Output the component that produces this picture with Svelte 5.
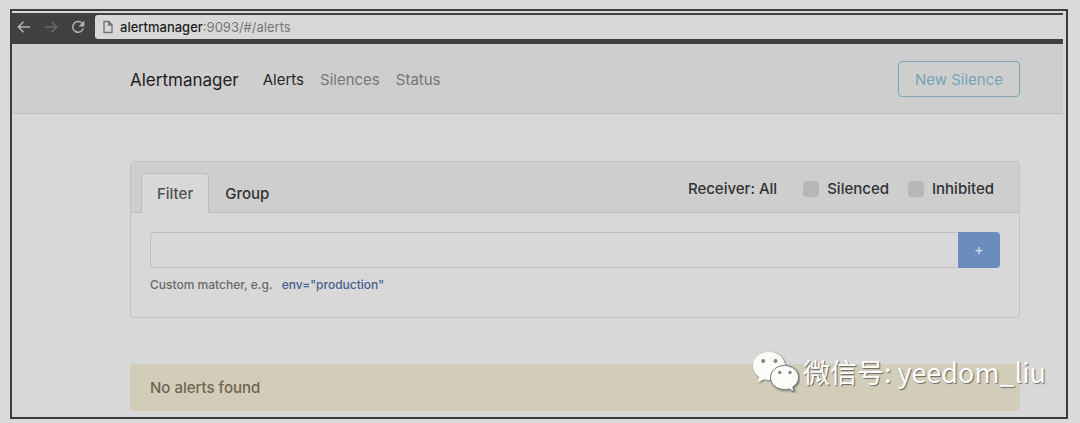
<script>
  let matcher = $state('');
  let silenced = $state(false);
  let inhibited = $state(false);
</script>

<div class="frame">
  <div class="browser">
    <button class="tool" aria-label="Back">
      <svg width="14" height="14" viewBox="0 0 14 14"><path d="M13 7H1.500M6.500 1.800 1.300 7l5.200 5.200" /></svg>
    </button>
    <button class="tool dim" aria-label="Forward">
      <svg width="14" height="14" viewBox="0 0 14 14"><path d="M1 7h11.500M7.500 1.800 12.700 7l-5.200 5.200" /></svg>
    </button>
    <button class="tool" aria-label="Reload">
      <svg width="14" height="14" viewBox="0 0 14 14"><path d="M11.6 3.800A5.400 5.400 0 1 0 12.300 8.400" /><path class="solid" d="M13.400.600v5.800H7.600z" /></svg>
    </button>
    <div class="address">
      <svg width="10" height="14" viewBox="0 0 10 14"><path d="M1 1.500h4.800L9 4.800V12.500H1zM5.600 1.500V5H9" /></svg>
      <span><b>alertmanager</b>:9093/#/alerts</span>
    </div>
  </div>

  <header>
    <nav>
      <a class="brand" href="#/">Alertmanager</a>
      <a class="current" href="#/alerts">Alerts</a>
      <a href="#/silences">Silences</a>
      <a href="#/status">Status</a>
    </nav>
    <button class="new">New Silence</button>
  </header>

  <main>
    <section class="card">
      <div class="head">
        <div class="tabs">
          <button class="tab active">Filter</button>
          <button class="tab">Group</button>
        </div>
        <div class="options">
          <button class="receiver">Receiver: All</button>
          <label><input type="checkbox" bind:checked={silenced} />Silenced</label>
          <label><input type="checkbox" bind:checked={inhibited} />Inhibited</label>
        </div>
      </div>
      <div class="body">
        <div class="group">
          <input type="text" aria-label="Custom matcher" bind:value={matcher} />
          <button class="add" aria-label="Add matcher">+</button>
        </div>
        <p class="help">Custom matcher, e.g. <button class="example" onclick={() => (matcher = 'env="production"')}>env="production"</button></p>
      </div>
    </section>
    <div class="notice">No alerts found</div>
  </main>

  <div class="watermark">
    <svg width="48" height="42" viewBox="0 0 48 42">
      <g class="bubble">
        <path d="M17 1C8 1 1 7 1 15c0 4.600 2.500 8.500 6.300 11L5.600 31.500l6.200-3.200c1.700.4 3.400.7 5.200.7 9 0 16-6.300 16-14S26 1 17 1z" />
        <path class="front" d="M32.500 14.500C24.600 14.500 18.500 19.800 18.500 26.500s6.100 12 14 12c1.600 0 3.100-.2 4.500-.6l5.200 2.900-1.400-4.800c3.500-2.200 5.700-5.600 5.700-9.500 0-6.700-6.100-12-14-12z" />
      </g>
      <g class="eyes">
        <circle cx="11.200" cy="10" r="2" /><circle cx="23.500" cy="10" r="2" />
        <circle cx="27.800" cy="21.500" r="1.700" /><circle cx="38" cy="21.500" r="1.700" />
      </g>
    </svg>
    <span>微信号: yeedom_liu</span>
  </div>
</div>

<style>
  :global(body) {
    background: #dadada;
  }
  .frame,
  .frame * {
    box-sizing: border-box;
  }
  .frame {
    position: relative;
    margin: 9px 12px 3px 10px;
    border: 2px solid #3c3c3d;
    padding: 2px 3px 6px 0;
    background: #d8d8d8;
    font: 15px/24px Inter, 'Liberation Sans', sans-serif;
    color: #303235;
  }
  button {
    font: inherit;
    color: inherit;
    background: none;
    border: 0;
    padding: 0;
  }
  a {
    color: inherit;
    text-decoration: none;
  }
  svg {
    display: block;
    fill: none;
  }
  .browser {
    display: flex;
    align-items: center;
    gap: 13px;
    padding: 2px 0 5px 5px;
    background: #404141;
  }
  .tool {
    stroke: #b4b4b4;
    stroke-width: 1.5;
  }
  .dim {
    stroke: #686969;
  }
  .solid {
    fill: #b4b4b4;
    stroke: none;
  }
  .address {
    flex: 1;
    display: flex;
    align-items: center;
    gap: 7px;
    padding-left: 8px;
    margin-left: -3px;
    border-radius: 3px 0 0 3px;
    background: #d8d8d8;
    font-size: 13px;
    color: #747576;
  }
  .address svg {
    stroke: #747474;
    stroke-width: 1.4;
  }
  .address b {
    font-weight: 500;
    color: #1f1f20;
  }
  header {
    display: flex;
    justify-content: space-between;
    align-items: center;
    padding: 17px 43px 16px 118px;
    border-bottom: 1px solid #bebebe;
    background: #cecece;
  }
  nav {
    display: flex;
    align-items: center;
    gap: 16px;
    padding-top: 2px;
    color: #757678;
  }
  .brand {
    margin-right: 8px;
    font-size: 17px;
    color: #1f2022;
  }
  .current {
    color: #28292b;
  }
  .new {
    padding: 6px 16px 4px;
    border: 1px solid #7fa5b3;
    border-radius: 4px;
    color: #76a5b5;
  }
  main {
    padding: 47px 43px 0 118px;
  }
  .card {
    border: 1px solid #c2c2c2;
    border-radius: 4px;
  }
  .head {
    display: flex;
    justify-content: space-between;
    padding: 11px 25px 0 10px;
    border-bottom: 1px solid #bdbdbd;
    background: #cecece;
  }
  .tabs {
    display: flex;
    margin-bottom: -1px;
  }
  .tab {
    padding: 8px 15px 7px;
    border: 1px solid transparent;
    border-bottom: 0;
    border-radius: 4px 4px 0 0;
    font-weight: 500;
  }
  .active {
    border-color: #bdbdbd;
    background: #d8d8d8;
    color: #505254;
  }
  .options {
    display: flex;
    align-items: center;
    gap: 19px;
    padding-bottom: 8px;
    font-weight: 500;
  }
  .receiver {
    margin-right: 7px;
  }
  label {
    display: flex;
    align-items: center;
    gap: 8px;
  }
  input[type='checkbox'] {
    appearance: none;
    width: 16px;
    height: 16px;
    margin: 0;
    border-radius: 4px;
    background: #b7b7b7;
  }
  input[type='checkbox']:checked {
    background: #6b8fc0;
  }
  .body {
    padding: 19px 19px 20px;
  }
  .group {
    display: flex;
    height: 36px;
  }
  input[type='text'] {
    flex: 1;
    min-width: 0;
    padding: 0 12px;
    border: 1px solid #bdbdbd;
    border-right: 0;
    border-radius: 4px 0 0 4px;
    background: transparent;
    font: inherit;
    outline: 0;
  }
  .add {
    width: 42px;
    border-radius: 0 4px 4px 0;
    background: #6a8dbd;
    color: #d5dce5;
  }
  .help {
    margin: 5px 0 0;
    font-size: 12px;
    font-weight: 500;
    color: #68696b;
  }
  .example {
    margin-left: 6px;
    color: #44618f;
  }
  .notice {
    margin-top: 46px;
    padding: 12px 20px 11px;
    border-radius: 4px;
    background: #d1cdb8;
    font-weight: 500;
    color: #6f644f;
  }
  .watermark {
    position: absolute;
    right: 20px;
    bottom: 24px;
    display: flex;
    align-items: center;
    gap: 3px;
    font: 27px/42px 'Noto Sans CJK SC', sans-serif;
    color: #fff;
    text-shadow: 1px 1px 1px #666;
  }
  .bubble {
    fill: #fbfbf8;
    filter: drop-shadow(1px 1px 1px #777);
  }
  .front {
    stroke: #777;
    stroke-width: 1;
  }
  .eyes {
    fill: #858585;
  }
</style>
